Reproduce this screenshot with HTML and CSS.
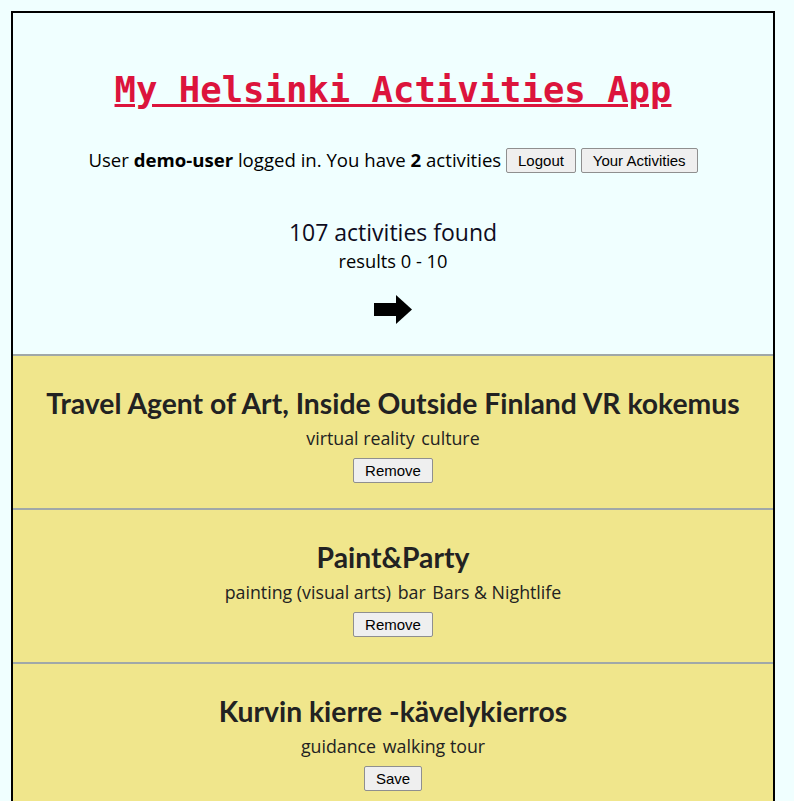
FILE: index.html
```html
<!DOCTYPE html>
<html>
<head>
<meta charset="utf-8">
<title>My Helsinki Activities App</title>
<link rel="stylesheet" href="styles.css">
</head>
<body>
<div class="app">
  <header class="top">
    <h1 class="title">My Helsinki Activities App</h1>
    <p class="user">User <b>demo-user</b> logged in. You have <b>2</b> activities <button class="btn">Logout</button> <button class="btn">Your Activities</button></p>
    <div class="found">107 activities found</div>
    <div class="results">results 0 - 10</div>
    <div class="next">
      <svg width="38" height="29" viewBox="0 0 38 29"><rect x="0" y="8" width="23" height="13" fill="#000"/><polygon points="22,0 38,14.5 22,29" fill="#000"/></svg>
    </div>
  </header>
  <section class="card">
    <h2 class="card-title">Travel Agent of Art, Inside Outside Finland VR kokemus</h2>
    <div class="tags"><span class="tag">virtual reality</span> <span class="tag">culture</span></div>
    <button class="btn">Remove</button>
  </section>
  <section class="card">
    <h2 class="card-title">Paint&amp;Party</h2>
    <div class="tags"><span class="tag">painting (visual arts)</span> <span class="tag">bar</span> <span class="tag">Bars &amp; Nightlife</span></div>
    <button class="btn">Remove</button>
  </section>
  <section class="card">
    <h2 class="card-title">Kurvin kierre -kävelykierros</h2>
    <div class="tags"><span class="tag">guidance</span> <span class="tag">walking tour</span></div>
    <button class="btn">Save</button>
  </section>
</div>
</body>
</html>
```
FILE: styles.css
```css
html, body {
  margin: 0;
  padding: 0;
  background: #f0ffff;
}
body {
  font-family: "Open Sans", "Noto Sans", sans-serif;
  color: #000;
}
.app {
  margin: 11px 0 0 11px;
  width: 760px;
  border: 2px solid #000;
  text-align: center;
}
.top {
  padding: 56px 0 30px;
}
.title {
  margin: 0;
  font-family: "DejaVu Sans Mono", monospace;
  font-size: 35.6px;
  line-height: 42px;
  font-weight: bold;
  color: #dc143c;
  text-decoration: underline;
}
.user {
  margin: 37px 0 0;
  font-size: 18.6px;
  line-height: 24px;
}
.btn {
  font-family: "Liberation Sans", Arial, sans-serif;
  font-size: 15px;
  line-height: 17px;
  padding: 3px 11px;
  background: #efefef;
  border: 1px solid #8f8f8f;
  border-radius: 2px;
  color: #000;
  vertical-align: 1px;
}
.found {
  margin-top: 44px;
  font-size: 23px;
  line-height: 30px;
  color: #0e0c1e;
}
.results {
  margin-top: 2px;
  font-size: 18.3px;
  line-height: 24px;
}
.next {
  margin-top: 22px;
  height: 29px;
}
.next svg {
  display: block;
  margin: 0 auto;
}
.card {
  background: #f0e68c;
  border-top: 2px solid #a0a8a8;
  padding: 30px 0 25px;
  color: #222;
}
.card-title {
  margin: 0;
  font-family: Lato, "Noto Sans", sans-serif;
  font-size: 28.3px;
  line-height: 34px;
  font-weight: bold;
  color: #222;
}
.tags {
  margin: 6px 0 8px;
  font-size: 17.8px;
  line-height: 24px;
}
.tag {
  margin: 0 1px;
}
```
